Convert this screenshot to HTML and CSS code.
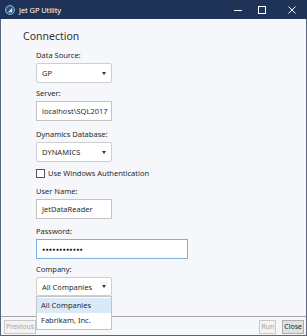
FILE: index.html
```html
<!DOCTYPE html>
<html lang="en">
<head>
  <meta charset="UTF-8">
  <meta name="viewport" content="width=device-width, initial-scale=1">
  <title>Jet GP Utility</title>
  <link rel="stylesheet" href="styles.css">
</head>
<body>
  <div class="window">
    <!-- Title bar -->
    <header class="titlebar">
      <svg class="app-icon" width="10" height="10" viewBox="0 0 10 10">
        <circle cx="5" cy="5" r="4.4" fill="#2a4f86" stroke="#9cc0ea" stroke-width="1"/>
        <path d="M3 7.2 L7.2 2.8 L7.2 7.2 Z" fill="#dfeaf7"/>
      </svg>
      <span class="title">Jet GP Utility</span>
      <div class="controls">
        <svg class="ctl min" width="8" height="8" viewBox="0 0 8 8"><path d="M0 4.5 H8" stroke="#fff" stroke-width="1"/></svg>
        <svg class="ctl max" width="8" height="8" viewBox="0 0 8 8"><rect x="0.5" y="0.5" width="7" height="7" fill="none" stroke="#fff" stroke-width="1"/></svg>
        <svg class="ctl close" width="8" height="8" viewBox="0 0 8 8"><path d="M0.5 0.5 L7.5 7.5 M7.5 0.5 L0.5 7.5" stroke="#fff" stroke-width="1"/></svg>
      </div>
    </header>

    <!-- Form content -->
    <main class="content">
      <h1>Connection</h1>
      <div class="form">
        <label class="lbl">Data Source:</label>
        <div class="select"><span>GP</span><i class="caret"></i></div>

        <label class="lbl">Server:</label>
        <div class="input server">localhost\SQL2017</div>

        <label class="lbl">Dynamics Database:</label>
        <div class="select"><span>DYNAMICS</span><i class="caret"></i></div>

        <div class="check"><span class="box"></span>Use Windows Authentication</div>

        <label class="lbl">User Name:</label>
        <div class="input user">JetDataReader</div>

        <label class="lbl">Password:</label>
        <div class="input wide focus"><span class="dots">●●●●●●●●●●●●</span></div>

        <label class="lbl">Company:</label>
        <div class="select-wrap">
          <div class="select open"><span>All Companies</span><i class="caret"></i></div>
          <ul class="dropdown">
            <li class="active">All Companies</li>
            <li>Fabrikam, Inc.</li>
          </ul>
        </div>
      </div>
    </main>

    <!-- Footer buttons -->
    <footer class="footer">
      <button class="btn disabled">Previous</button>
      <div class="right">
        <button class="btn disabled">Run</button>
        <button class="btn">Close</button>
      </div>
    </footer>
  </div>
</body>
</html>
```

FILE: styles.css
```css
* {
  margin: 0;
  padding: 0;
  box-sizing: border-box;
}
body {
  font-family: "Noto Sans", "Open Sans", sans-serif;
  font-size: 7.5px;
  color: #2b2b2b;
  background: #fff;
}
/* Window frame */
.window {
  width: 307px;
  height: 336px;
  display: flex;
  flex-direction: column;
  border: 1px solid #56667f;
  border-top: none;
  background: #f5f7fa;
}
.titlebar {
  height: 19px;
  background: #1f3358;
  display: flex;
  align-items: center;
  padding-left: 5px;
  margin: 0 -1px;
  color: #fff;
}
.app-icon {
  display: block;
}
.title {
  margin-left: 4px;
  font-size: 7.5px;
  letter-spacing: -0.1px;
}
.controls {
  margin-left: auto;
  display: flex;
  align-items: center;
  padding-right: 11px;
}
.ctl {
  display: block;
}
.ctl.max {
  margin-left: 16px;
}
.ctl.close {
  margin-left: 22px;
}
/* Content */
.content {
  flex: 1;
  padding: 9px 0 0 22px;
}
h1 {
  font-size: 10.5px;
  font-weight: normal;
  line-height: 16px;
  color: #333;
}
.form {
  padding-left: 13px;
  margin-top: 5px;
  display: flex;
  flex-direction: column;
  align-items: flex-start;
}
.lbl {
  display: block;
  line-height: 12px;
  margin-bottom: 2px;
}
.select, .input {
  width: 76px;
  height: 20px;
  border: 1px solid #c4c4c4;
  background: #fff;
  display: flex;
  align-items: center;
  padding-left: 5px;
  margin-bottom: 4px;
  white-space: nowrap;
  overflow: hidden;
}
.input.server {
  margin-bottom: 7px;
}
.input.user {
  margin-bottom: 6px;
}
.select {
  border-radius: 2px;
  border-color: #cfcfcf;
}
.caret {
  margin-left: auto;
  margin-right: 5px;
  width: 0;
  height: 0;
  border-left: 2.5px solid transparent;
  border-right: 2.5px solid transparent;
  border-top: 3px solid #333;
}
.input.wide {
  width: 152px;
}
.input.focus {
  border-color: #7eb0e0;
}
.dots {
  font-size: 5px;
  letter-spacing: 0.4px;
  color: #111;
}
.check {
  display: flex;
  align-items: center;
  line-height: 12px;
  margin: 1px 0 6px;
}
.box {
  width: 9px;
  height: 9px;
  border: 1px solid #555;
  background: #fff;
  margin-right: 3px;
}
/* Company dropdown */
.select-wrap {
  position: relative;
}
.select.open {
  height: 19px;
  margin-bottom: 0;
}
.dropdown {
  position: absolute;
  top: 100%;
  left: 0;
  width: 76px;
  list-style: none;
  background: #fff;
  border: 1px solid #c4c4c4;
  padding: 1px 0;
  z-index: 3;
}
.dropdown li {
  height: 15px;
  line-height: 15px;
  padding-left: 4px;
}
.dropdown li.active {
  background: #d9e9f8;
}
/* Footer */
.footer {
  height: 19px;
  border-top: 1px solid #a3a3a3;
  display: flex;
  align-items: center;
  padding: 1px 2px 0 3px;
}
.right {
  margin-left: auto;
  display: flex;
  gap: 6px;
}
.btn {
  font-family: "Noto Sans", "Open Sans", sans-serif;
  font-size: 7px;
  height: 14px;
  padding: 0 1px;
  background: #e1e1e1;
  border: 1px solid #adadad;
  color: #222;
}
.btn.disabled {
  background: #f3f3f3;
  border-color: #c9c9c9;
  color: #a6a6a6;
}
```
